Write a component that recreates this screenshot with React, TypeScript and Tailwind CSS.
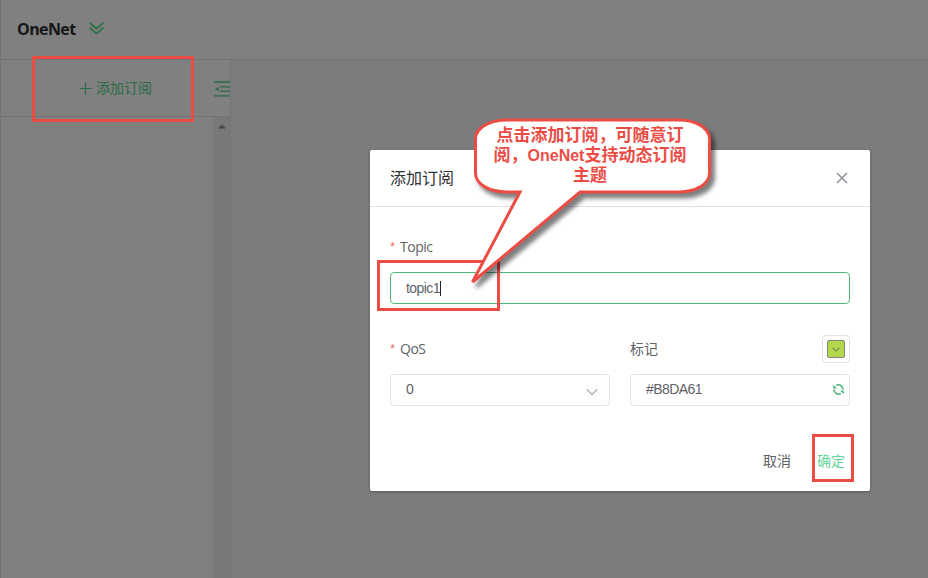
import React from "react";

const ui = "font-['Open_Sans','Noto_Sans_CJK_SC',sans-serif]";
const field = "font-['Liberation_Sans',sans-serif] text-[14px] tracking-[-0.55px] text-[#606266]";

function Label({ text, required }: { text: string; required?: boolean }) {
  return (
    <div className="flex h-5 items-center text-[14px] leading-5 text-[#606266]">
      {required && (
        <span className="mr-[5px] font-['Liberation_Sans',sans-serif] text-[13px] text-[#f56c6c]">*</span>
      )}
      <span className={required ? "tracking-[-0.5px]" : ""}>{text}</span>
    </div>
  );
}

function Sidebar() {
  return (
    <aside className="flex w-[230px] flex-col border-r border-[#727279]">
      <div className="flex h-[57px] items-center border-b border-[#727279] text-[#2b6b46]">
        <button className="ml-[78px] flex items-center text-[14px] leading-5">
          <svg width="13" height="13" viewBox="0 0 13 13" className="mr-[4px]" stroke="currentColor" strokeWidth="1.2">
            <path d="M6.5 .5v12M.5 6.5h12" />
          </svg>
          添加订阅
        </button>
        <svg width="16" height="16" viewBox="0 0 16 16" className="mt-px ml-auto" stroke="currentColor" strokeWidth="1.3" fill="none">
          <path d="M0 1h16M6 5.800h10M6 10.200h10M0 14.800h16" />
          <path d="M.8 8L4.800 5.800v4.400z" fill="currentColor" stroke="none" />
        </svg>
      </div>
      <div className="flex flex-1 justify-end">
        <div className="flex w-[17px] justify-center bg-[#787878] pt-[7px]">
          <svg width="8" height="5" viewBox="0 0 8 5" fill="#484848">
            <path d="M0 4.5L4 .5l4 4z" />
          </svg>
        </div>
      </div>
    </aside>
  );
}

function Dialog() {
  return (
    <section className="flex h-[341px] w-[500px] flex-col rounded-[2px] bg-white shadow-[0_1px_3px_rgba(0,0,0,0.3)]">
      <header className="flex h-[57px] items-center justify-between border-b border-[#dfe0ea] px-5">
        <h2 className="text-[16px] leading-6 text-[#303133]">添加订阅</h2>
        <svg width="12" height="12" viewBox="0 0 12 12" className="mr-[2px]" stroke="#909399" strokeWidth="1.5">
          <path d="M1 1l10 10M11 1L1 11" />
        </svg>
      </header>
      <div className="flex flex-col px-5 pt-[30px]">
        <Label text="Topic" required />
        <div className={`mt-[15px] flex h-8 items-center rounded-[4px] border border-[#4fb87b] px-[15px] ${field}`}>
          topic1
          <span className="h-[15px] w-px bg-[#222]" />
        </div>
        <div className="mt-[31px] grid grid-cols-2 gap-5">
          <div>
            <div className="flex h-7 items-center">
              <Label text="QoS" required />
            </div>
            <div className={`mt-[11px] flex h-8 items-center justify-between rounded-[4px] border border-[#dfe0ee] pr-[11px] pl-[15px] ${field}`}>
              <span className="relative -top-px">0</span>
              <svg width="12" height="8" viewBox="0 0 12 8" className="mt-[3px]" fill="none" stroke="#b4b8c0" strokeWidth="1.6">
                <path d="M.8 1.2L6 6.5l5.2-5.3" />
              </svg>
            </div>
          </div>
          <div>
            <div className="flex h-7 items-center justify-between">
              <Label text="标记" />
              <div className="flex size-7 items-center justify-center rounded-[4px] border border-[#e2e2e6]">
                <div className="flex size-[18px] items-center justify-center rounded-[2px] border border-[#858585] bg-[#b4d84b]">
                  <svg width="8" height="5" viewBox="0 0 8 5" fill="none" stroke="#7e9149" strokeWidth="1.4">
                    <path d="M.6 .7L4 3.9 7.4 .7" />
                  </svg>
                </div>
              </div>
            </div>
            <div className={`mt-[11px] flex h-8 items-center justify-between rounded-[4px] border border-[#dfe0ee] pr-[5px] pl-[15px] ${field}`}>
              <span className="relative -top-px">#B8DA61</span>
              <svg width="11" height="11" viewBox="0 0 11 11" className="relative -top-px" fill="none" stroke="#4fb87b" strokeWidth="1.6">
                <path d="M3.200 1.500A4.500 4.500 0 0 1 10 5.600M7.800 9.500A4.500 4.500 0 0 1 1 5.400" />
                <path d="M.3 .8v3.800h3.800zM10.700 10.200v-3.800h-3.800z" fill="#4fb87b" stroke="none" />
              </svg>
            </div>
          </div>
        </div>
      </div>
      <footer className="mt-[45px] flex justify-end gap-[26px] pr-[25px] text-[14px] leading-5">
        <button className="text-[#606266]">取消</button>
        <button className="text-[#67d598]">确定</button>
      </footer>
    </section>
  );
}

function Callout() {
  return (
    <div className="absolute top-[110px] left-[460px] h-[190px] w-[265px]">
      <svg width="265" height="190" viewBox="0 0 265 190" className="absolute inset-0 overflow-visible drop-shadow-[4px_5px_2px_rgba(0,0,0,0.5)]">
        <path
          d="M47 10H219C236 10 249.500 18 249.500 29V63C249.500 74 236 82 219 82H120L12.500 172L60 82H47C29 82 15.500 74 15.500 63V29C15.500 18 29 10 47 10Z"
          fill="white"
          stroke="#eb4d45"
          strokeWidth="3"
        />
      </svg>
      <p className="absolute top-[16px] left-[20px] w-[220px] text-center font-['Liberation_Sans','Noto_Sans_CJK_SC',sans-serif] text-[17px] leading-5 font-bold text-[#eb4d45]">
        点击添加订阅，可随意订
        <br />
        阅，<span className="text-[16px]">OneNet</span>支持动态订阅
        <br />
        主题
      </p>
    </div>
  );
}

export default function App() {
  return (
    <div className={`relative flex h-[578px] w-[928px] flex-col overflow-hidden border-l border-[#727279] bg-[#808080] ${ui}`}>
      <header className="flex h-[60px] items-center border-b border-[#727279] pb-[2px] pl-4">
        <h1 className="w-[58px] text-[16px] leading-6 font-bold tracking-[-0.6px] text-[#151617]">OneNet</h1>
        <svg width="15" height="13" viewBox="0 0 15 13" className="ml-[14px]" fill="none" stroke="#2f7049" strokeWidth="1.9">
          <path d="M.7 .8l6.800 5.600L14.300 .8M.7 5.800l6.800 5.800 6.800-5.800" />
        </svg>
      </header>
      <div className="flex flex-1">
        <Sidebar />
        <main className="flex-1 bg-[#7b7c7e]" />
      </div>
      <div className="absolute top-[150px] left-[369px]">
        <Dialog />
      </div>
      <div className="absolute inset-y-0 -left-px w-[928px]">
        <div className="absolute top-[56px] left-[32px] h-[66px] w-[162px] border-3 border-[#eb4d45]" />
        <div className="absolute top-[260px] left-[377px] h-[51px] w-[123px] border-3 border-[#eb4d45]" />
        <div className="absolute top-[434px] left-[812px] h-[48px] w-[42px] border-3 border-[#eb4d45]" />
        <Callout />
      </div>
    </div>
  );
}
